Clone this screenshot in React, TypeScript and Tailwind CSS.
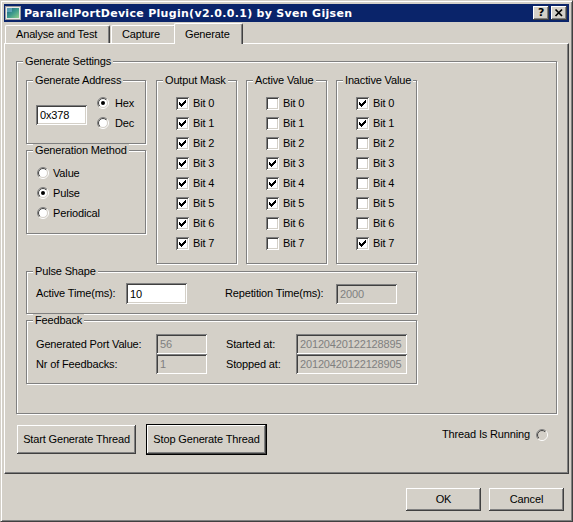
import type { ReactNode } from 'react'

const sunken =
  'shadow-[inset_1px_1px_0_#808080,inset_-1px_-1px_0_#fff,inset_2px_2px_0_#404040,inset_-2px_-2px_0_#d4d0c8]'
const raised = 'shadow-[inset_-1px_-1px_0_#404040,inset_1px_1px_0_#fff,inset_-2px_-2px_0_#808080]'

function Radio({ checked = false, fill = '#fff' }: { checked?: boolean; fill?: string }) {
  return (
    <svg width="12" height="12" viewBox="0 0 12 12" className="block shrink-0">
      <defs>
        <linearGradient id="radio-outer" x1="0" y1="0" x2="1" y2="1">
          <stop offset="0.5" stopColor="#808080" />
          <stop offset="0.5" stopColor="#ffffff" />
        </linearGradient>
        <linearGradient id="radio-inner" x1="0" y1="0" x2="1" y2="1">
          <stop offset="0.5" stopColor="#404040" />
          <stop offset="0.5" stopColor="#d4d0c8" />
        </linearGradient>
      </defs>
      <circle cx="6" cy="6" r="5.5" fill="none" stroke="url(#radio-outer)" />
      <circle cx="6" cy="6" r="4.5" fill={fill} stroke="url(#radio-inner)" />
      {checked && <circle cx="6" cy="6" r="2" fill="#000" />}
    </svg>
  )
}

function Check({ checked }: { checked: boolean }) {
  return (
    <div className={`h-[13px] w-[13px] shrink-0 bg-white ${sunken}`}>
      {checked && (
        <svg width="13" height="13" viewBox="0 0 13 13" className="block" shapeRendering="crispEdges">
          <path
            d="M3 5h1v3H3zM4 6h1v3H4zM5 7h1v3H5zM6 6h1v3H6zM7 5h1v3H7zM8 4h1v3H8zM9 3h1v3H9z"
            fill="#000"
          />
        </svg>
      )}
    </div>
  )
}

function Group({ title, className, children }: { title: string; className: string; children?: ReactNode }) {
  return (
    <div className={`relative border border-[#808080] shadow-[1px_1px_0_#fff,inset_1px_1px_0_#fff] ${className}`}>
      <span className="absolute -top-[7px] left-[6px] bg-[#d4d0c8] px-[2px] leading-[13px]">{title}</span>
      {children}
    </div>
  )
}

function Field({ value, disabled = false, className }: { value: string; disabled?: boolean; className: string }) {
  return (
    <div
      className={`flex items-center px-[4px] pt-[1px] ${sunken} ${
        disabled ? 'bg-[#d4d0c8] text-[#808080]' : 'bg-white text-black'
      } ${className}`}
    >
      {value}
    </div>
  )
}

function BitGroup({ title, bits }: { title: string; bits: boolean[] }) {
  return (
    <Group title={title} className="h-[184px] w-[81px] pl-[19px] pt-[16px]">
      <div className="flex flex-col gap-[7px]">
        {bits.map((on, i) => (
          <div key={i} className="flex h-[13px] items-center gap-[4px]">
            <Check checked={on} />
            <span>Bit {i}</span>
          </div>
        ))}
      </div>
    </Group>
  )
}

function RadioRow({ label, checked = false }: { label: string; checked?: boolean }) {
  return (
    <div className="flex h-[12px] items-center gap-[4px]">
      <Radio checked={checked} />
      <span>{label}</span>
    </div>
  )
}

function WindowIcon() {
  return (
    <svg width="16" height="16" viewBox="0 0 16 16" className="block">
      <defs>
        <linearGradient id="win-icon" x1="0" y1="0" x2="1" y2="1">
          <stop offset="0" stopColor="#1f5f86" />
          <stop offset="0.5" stopColor="#3d9a8c" />
          <stop offset="1" stopColor="#8fd08a" />
        </linearGradient>
      </defs>
      <rect x="0.5" y="1.5" width="15" height="13" fill="#e8e8e8" stroke="#9a9a9a" />
      <rect x="2" y="3" width="12" height="10" fill="url(#win-icon)" />
      <rect x="2" y="3" width="5" height="4" fill="#6fb0c8" opacity="0.7" />
    </svg>
  )
}

export default function App() {
  const all = [true, true, true, true, true, true, true, true]
  const active = [false, false, false, true, true, true, false, false]
  const inactive = [true, true, false, false, false, false, false, true]

  return (
    <div className="flex h-[522px] w-[573px] flex-col border border-t-[#d4d0c8] border-l-[#d4d0c8] border-r-[#404040] border-b-[#404040] bg-[#d4d0c8] p-[3px] font-['Liberation_Sans','Arial',sans-serif] text-[11px] leading-[13px] tracking-[-0.15px] text-black shadow-[inset_1px_1px_0_#fff,inset_-1px_-1px_0_#808080]">
      {/* title bar */}
      <div className="flex h-[18px] shrink-0 items-center bg-[#0a246a] pl-[1px] pr-[2px]">
        <WindowIcon />
        <span className="ml-[3px] font-['DejaVu_Sans',sans-serif] text-[11px] font-bold tracking-[0.3px] text-white">
          ParallelPortDevice Plugin(v2.0.0.1) by Sven Gijsen
        </span>
        <div className="ml-auto flex gap-[2px]">
          <div className={`flex h-[14px] w-[16px] items-center justify-center bg-[#d4d0c8] pb-[1px] font-['DejaVu_Sans',sans-serif] text-[11px] font-bold ${raised}`}>
            ?
          </div>
          <div className={`flex h-[14px] w-[16px] items-center justify-center bg-[#d4d0c8] ${raised}`}>
            <svg width="16" height="14" viewBox="0 0 16 14" className="block">
              <path d="M4.5 3.5l6.5 6.5M11 3.5l-6.5 6.5" stroke="#000" strokeWidth="1.7" />
            </svg>
          </div>
        </div>
      </div>

      {/* tabs */}
      <div className="flex h-[21px] shrink-0 items-end pl-[1px]">
        <div className="mr-[1px] flex h-[18px] w-[105px] items-center rounded-t-[2px] border-t border-r border-l border-t-white border-r-[#404040] border-l-white pl-[10px] shadow-[inset_-1px_0_0_#808080]">
          Analyse and Test
        </div>
        <div className="flex h-[18px] w-[65px] items-center rounded-t-[2px] border-t border-r border-l border-t-white border-r-[#404040] border-l-white pl-[10px] shadow-[inset_-1px_0_0_#808080]">
          Capture
        </div>
        <div className="relative top-px z-10 -mx-[2px] flex h-[21px] w-[69px] items-center rounded-t-[2px] border-t border-r border-l border-t-white border-r-[#404040] border-l-white bg-[#d4d0c8] pl-[10px] shadow-[inset_-1px_0_0_#808080]">
          Generate
        </div>
      </div>

      {/* tab panel */}
      <div className="flex h-[431px] shrink-0 flex-col border border-t-white border-l-white border-r-[#404040] border-b-[#404040] shadow-[inset_-1px_-1px_0_#808080]">
        <Group title="Generate Settings" className="mt-[17px] ml-[11px] h-[353px] w-[541px] pl-[9px] pt-[18px]">
          <div className="flex items-start gap-[10px]">
            <div className="flex w-[120px] flex-col gap-[6px]">
              <Group title="Generate Address" className="flex h-[64px] items-start pl-[9px] pt-[16px]">
                <Field value="0x378" className="mt-[8px] h-[20px] w-[51px]" />
                <div className="ml-[10px] flex flex-col gap-[8px]">
                  <div className="flex h-[12px] items-center gap-[6px]">
                    <Radio checked />
                    <span>Hex</span>
                  </div>
                  <div className="flex h-[12px] items-center gap-[6px]">
                    <Radio />
                    <span>Dec</span>
                  </div>
                </div>
              </Group>
              <Group title="Generation Method" className="flex h-[84px] flex-col gap-[8px] pl-[10px] pt-[16px]">
                <RadioRow label="Value" />
                <RadioRow label="Pulse" checked />
                <RadioRow label="Periodical" />
              </Group>
            </div>
            <div className="flex gap-[9px]">
              <BitGroup title="Output Mask" bits={all} />
              <BitGroup title="Active Value" bits={active} />
              <BitGroup title="Inactive Value" bits={inactive} />
            </div>
          </div>

          <Group title="Pulse Shape" className="mt-[7px] flex h-[43px] w-[391px] items-start pl-[9px] pt-[11px]">
            <div className="flex h-[21px] items-center">
              <span className="w-[90px]">Active Time(ms):</span>
              <Field value="10" className="h-[21px] w-[61px]" />
              <span className="ml-[38px] w-[111px]">Repetition Time(ms):</span>
              <Field value="2000" disabled className="h-[20px] w-[61px]" />
            </div>
          </Group>

          <Group title="Feedback" className="mt-[6px] flex h-[64px] w-[391px] flex-col pl-[9px] pt-[13px]">
            <div className="flex h-[20px] items-center">
              <span className="w-[120px]">Generated Port Value:</span>
              <Field value="56" disabled className="h-[20px] w-[51px]" />
              <span className="ml-[19px] w-[70px]">Started at:</span>
              <Field value="20120420122128895" disabled className="h-[20px] w-[111px] px-[2px]" />
            </div>
            <div className="flex h-[20px] items-center">
              <span className="w-[120px]">Nr of Feedbacks:</span>
              <Field value="1" disabled className="h-[20px] w-[51px]" />
              <span className="ml-[19px] w-[70px]">Stopped at:</span>
              <Field value="20120420122128905" disabled className="h-[20px] w-[111px] px-[2px]" />
            </div>
          </Group>
        </Group>

        <div className="mt-[11px] flex items-start pl-[12px]">
          <button
            type="button"
            className={`flex h-[29px] w-[119px] items-center justify-center bg-[#d4d0c8] ${raised}`}
          >
            Start Generate Thread
          </button>
          <button
            type="button"
            className="-mt-px ml-[10px] flex h-[31px] w-[121px] items-center justify-center border border-black bg-[#d4d0c8] shadow-[inset_-1px_-1px_0_#404040,inset_1px_1px_0_#fff,inset_-2px_-2px_0_#808080]"
          >
            Stop Generate Thread
          </button>
          <div className="mt-[3px] mr-[20px] ml-auto flex items-center gap-[6px]">
            <span>Thread Is Running</span>
            <Radio fill="#d4d0c8" />
          </div>
        </div>
      </div>

      {/* dialog buttons */}
      <div className="mt-[14px] flex justify-end gap-[8px] pr-[5px]">
        <button type="button" className={`flex h-[23px] w-[75px] items-center justify-center bg-[#d4d0c8] ${raised}`}>
          OK
        </button>
        <button type="button" className={`flex h-[23px] w-[75px] items-center justify-center bg-[#d4d0c8] ${raised}`}>
          Cancel
        </button>
      </div>
    </div>
  )
}
